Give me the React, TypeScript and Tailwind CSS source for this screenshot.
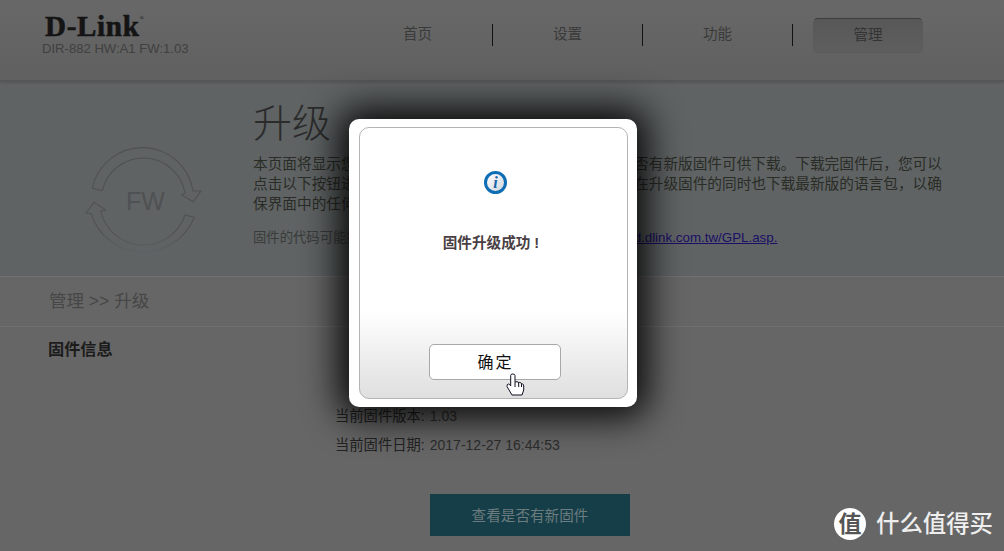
export default function App() {
  const nav = ["首页", "设置", "功能"];
  return (
    <div className="relative w-[1004px] h-[551px] overflow-hidden bg-[#666666] font-['Liberation_Sans','Noto_Sans_CJK_SC',sans-serif]">
      <header className="relative h-[81px] flex bg-gradient-to-b from-[#686868] to-[#606060] border-b border-[#565656] shadow-[0_1px_3px_rgba(0,0,0,0.2)]">
        <div className="w-[343px] pl-[42px] pt-[12px]">
          <div className="pl-[3px] h-[28px] font-['Liberation_Serif',serif] font-bold text-[29px] leading-[28px] tracking-[0.7px] [-webkit-text-stroke:0.6px_#141414] text-[#141414] flex items-start">
            D-Link<span className="text-[6px] leading-[12px] font-normal tracking-normal [-webkit-text-stroke:0px]">®</span>
          </div>
          <div className="text-[13.1px] leading-[16px] text-[#404040] mt-[1px]">DIR-882 HW:A1 FW:1.03</div>
        </div>
        <nav className="flex pt-[18px] items-start">
          {nav.map((n) => (
            <div key={n} className="w-[150px] h-[34px] flex items-center justify-center text-[14.6px] text-[#3a3a3a] relative pr-px">
              {n}
              <span className="absolute right-0 top-[6px] h-[22px] w-px bg-[#111111]" />
            </div>
          ))}
          <div className="ml-[20px] w-[110px] h-[35px] rounded-[5px] border border-[#5a5a5a] border-t-[#3c3c3c] bg-gradient-to-b from-[#585858] to-[#5e5e5e] flex items-center justify-center text-[14.6px] text-[#333333]">
            管理
          </div>
        </nav>
      </header>

      <section className="h-[196px] flex bg-[#5f6364] border-b border-[#707070]">
        <div className="relative w-[253px] pl-[70px] pt-[49px] shrink-0">
          <svg width="150" height="130" viewBox="0 0 150 130" fill="none" stroke="#505152" strokeWidth="1.1" className="block">
            <defs>
              <linearGradient id="fade" x1="0" y1="72" x2="0" y2="124" gradientUnits="userSpaceOnUse">
                <stop offset="0.6" stopColor="#505152" />
                <stop offset="1" stopColor="#5f6365" />
              </linearGradient>
            </defs>
            <path d="M22.3 58.3 A51.2 51.2 0 0 1 123 61 L131 61 L123.3 71.7 L111.7 65 L115 63 A42.2 42.2 0 0 0 32.3 60.7 Z" />
            <path d="M124.3 87.3 L115 85 A43.8 43.8 0 0 1 30.7 81 L35.7 80 L24 72.3 L16 83.3 L21 83.3 A54.8 54.8 0 0 0 124.3 87.3 Z" stroke="url(#fade)" />
          </svg>
          <span className="absolute left-[126px] top-[105px] text-[25px] leading-[30px] text-[#505152]">FW</span>
        </div>
        <div className="pt-[16px] whitespace-nowrap">
          <h1 className="text-[39px] leading-[46px] text-[#2b2b2b] font-light font-['Noto_Sans_CJK_SC',serif]">升级</h1>
          <p className="mt-[11px] text-[14.67px] leading-[20px] text-[#2a2c26]">
            本页面将显示您路由器当前的固件版本和日期，并可检查是否有新版固件可供下载。下载完固件后，您可以
            <br />
            点击以下按钮进行固件升级。我们强烈建议您勾选此项，并在升级固件的同时也下载最新版的语言包，以确
            <br />
            保界面中的任何语言都是最新的。
          </p>
          <p className="mt-[16px] text-[13.33px] leading-[16px] text-[#3a3c3a]">
            固件的代码可能按照GPL发布。如需获取源代码，请访问 <span className="text-[#1a0f66] underline">http://tsd.dlink.com.tw/GPL.asp.</span>
          </p>
        </div>
      </section>

      <div className="h-[50px] flex items-center pl-[49px] border-b border-[#707070] text-[17.5px] text-[#474747]">管理 &gt;&gt; 升级</div>

      <h2 className="pl-[48px] mt-[11px] text-[16.2px] leading-[22px] font-bold text-[#1c1c1c]">固件信息</h2>

      <div className="pl-[335px] mt-[42px] text-[14.3px] text-[#222222]">
        <div className="h-[29px] flex items-center gap-[5px]">当前固件版本: <span className="text-[14px] text-[#2d2d2d]">1.03</span></div>
        <div className="h-[29px] flex items-center gap-[5px]">当前固件日期: <span className="text-[14px] text-[#2d2d2d]">2017-12-27 16:44:53</span></div>
      </div>

      <div className="pl-[430px] mt-[34px]">
        <div className="w-[200px] h-[42px] pt-[3px] flex items-center justify-center bg-[#153e48] text-[14.6px] text-[#6c7b7e]">查看是否有新固件</div>
      </div>

      <div className="absolute left-[349px] top-[119px] w-[288px] h-[288px] bg-white rounded-[10px] shadow-[0_0_36px_10px_rgba(0,0,0,0.95)] pl-[10px] pr-[9px] pt-[8px] pb-[8px]">
        <div className="relative h-full rounded-[10px] border border-[#b4b4b4] bg-gradient-to-b from-white from-[68%] to-[#dfdfdf] flex flex-col items-center">
          <div className="mt-[43px] ml-[4px] w-[23px] h-[23px] rounded-full border-[3px] border-[#0f6db4] bg-gradient-to-br from-white to-[#cfd6dd] flex items-center justify-center font-['Liberation_Serif',serif] italic font-bold text-[16px] leading-none text-[#1a63a8]">
            i
          </div>
          <div className="mt-[39px] text-[14.6px] leading-[20px] font-bold text-[#4a3f44] -ml-[5px]">固件升级成功 !</div>
          <div className="mt-auto mb-[18px] ml-[2px] w-[132px] h-[36px] pl-[2px] pt-px bg-white border border-[#a8a8a8] rounded-[5px] flex items-center justify-center text-[16px] tracking-[2px] text-[#111111]">
            确定
          </div>
          <svg width="20" height="24" viewBox="0 0 20 24" className="absolute left-[146px] top-[245px]" fill="#ffffff" stroke="#101020" strokeWidth="1" strokeLinejoin="round">
            <path d="M4.7 2.5 Q4.7 1 6.8 1 Q9 1 9 2.5 V9.5 Q9.5 8.7 11 8.7 Q12.5 8.7 12.7 10 Q13.2 9.3 14.3 9.5 Q15.3 9.7 15.5 11 Q16 10.5 16.8 11 Q17.7 11.5 17.7 13 V17 L16 22 H6 L1 13.5 Q0.8 11 2.5 11 Q3.8 11 4.7 13 Z" />
            <path d="M9 9.5 V14 M12.7 10 V14 M15.5 11 V14" fill="none" />
          </svg>
        </div>
      </div>

      <div className="absolute left-[834px] top-[508px] flex items-center gap-[10px]">
        <div className="w-[32px] h-[32px] rounded-full bg-white flex items-center justify-center text-[23px] font-bold leading-none text-[#555555]">值</div>
        <div className="text-[23.4px] leading-[32px] font-medium text-[#eeeeee] whitespace-nowrap">什么值得买</div>
      </div>
    </div>
  );
}
